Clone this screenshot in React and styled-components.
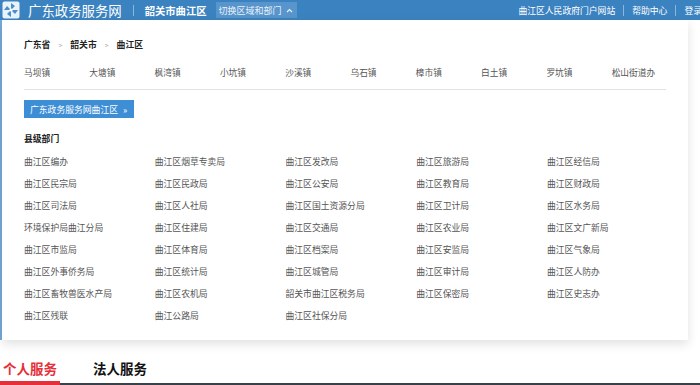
import React from 'react';
import styled, { createGlobalStyle } from 'styled-components';

const GlobalStyle = createGlobalStyle`
  html, body {
    margin: 0;
    padding: 0;
    background: #fff;
    font-family: "Noto Sans CJK SC", "Liberation Sans", sans-serif;
    overflow: hidden;
  }
  * { box-sizing: border-box; }
`;

const Page = styled.div`
  width: 700px;
  height: 385px;
  overflow: hidden;
`;

const Header = styled.header`
  height: 20px;
  background: #3b83c0;
  display: flex;
  align-items: center;
  justify-content: space-between;
  color: #fff;
  white-space: nowrap;
`;

const HeaderLeft = styled.div`
  display: flex;
  align-items: center;
  padding-left: 2px;
`;

const Title = styled.span`
  font-size: 13.4px;
  margin-left: 8px;
  line-height: 20px;
`;

const Divider = styled.span`
  width: 1px;
  height: 11px;
  background: #8cb6dc;
  margin: 0 ${(p) => p.$gap || 11}px;
`;

const Region = styled.span`
  font-size: 10.3px;
  font-weight: bold;
`;

const Switcher = styled.span`
  margin-left: 9px;
  height: 16px;
  padding: 0 4px 0 3px;
  background: #5795cc;
  font-size: 9px;
  display: flex;
  align-items: center;
  gap: 4px;
  color: #eaf2fa;
`;

const HeaderRight = styled.nav`
  display: flex;
  align-items: center;
  font-size: 8.8px;
  margin-right: -2px;
`;

const Main = styled.main`
  position: relative;
`;

const Banner = styled.div`
  height: 320px;
  background: linear-gradient(to right, #77a9d8 0, #77a9d8 2px, #fff 2px);
`;

const Panel = styled.section`
  position: absolute;
  top: 0;
  left: 2px;
  width: 686px;
  height: 320px;
  background: #fff;
  box-shadow: 0 4px 10px rgba(0, 0, 0, 0.12);
  padding: 18px 22px 15px;
`;

const Crumbs = styled.div`
  display: flex;
  align-items: center;
  font-size: 8.8px;
  font-weight: bold;
  color: #222;
  line-height: 14px;
`;

const CrumbArrow = styled.span`
  color: #aaa;
  font-weight: normal;
  font-size: 7px;
  margin: 0 8px;
`;

const Towns = styled.div`
  margin-top: 14px;
  padding-bottom: 9px;
  border-bottom: 1px solid #e2e2e2;
  display: grid;
  grid-template-columns: repeat(10, 65.3px);
  width: 642px;
  font-size: 8.7px;
  line-height: 14px;
  color: #555;
  white-space: nowrap;
`;

const SiteButton = styled.div`
  margin-top: 10px;
  width: 110px;
  height: 18px;
  background: #3d8ed5;
  color: #fff;
  font-size: 8.8px;
  display: flex;
  align-items: center;
  padding-left: 6px;
  gap: 5px;
`;

const SectionTitle = styled.h3`
  margin: 14px 0 0;
  font-size: 8.8px;
  font-weight: bold;
  color: #222;
  line-height: 14px;
`;

const DeptGrid = styled.div`
  margin-top: 4px;
  display: grid;
  grid-template-columns: repeat(5, 130.75px);
  grid-auto-rows: 22px;
  align-items: center;
  font-size: 8.8px;
  color: #555;
  white-space: nowrap;
`;

const TabBar = styled.div`
  height: 45px;
  display: flex;
  align-items: flex-end;
  gap: 30px;
  border-bottom: 2px solid #39424b;
`;

const Tab = styled.div`
  font-size: 13.5px;
  font-weight: bold;
  line-height: 20px;
  padding: 0 3px 3px;
  margin-bottom: -2px;
  color: ${(p) => (p.$active ? '#e5303a' : '#111')};
  border-bottom: 4px solid ${(p) => (p.$active ? '#e5303a' : 'transparent')};
`;

const Logo = () => (
  <svg width="18" height="18" viewBox="0 0 18 18">
    <rect x="0.5" y="0.5" width="17" height="17" rx="2" fill="#eaf2fa" />
    <g fill="#4a8fcb">
      <path d="M9 9 L9 2 L13 5 Z" />
      <path d="M9 9 L16 9 L13 13 Z" />
      <path d="M9 9 L9 16 L5 13 Z" />
      <path d="M9 9 L2 9 L5 5 Z" />
    </g>
    <circle cx="9" cy="9" r="1.6" fill="#fff" />
  </svg>
);

const towns = ['马坝镇', '大塘镇', '枫湾镇', '小坑镇', '沙溪镇', '乌石镇', '樟市镇', '白土镇', '罗坑镇', '松山街道办'];

const depts = [
  '曲江区编办', '曲江区烟草专卖局', '曲江区发改局', '曲江区旅游局', '曲江区经信局',
  '曲江区民宗局', '曲江区民政局', '曲江区公安局', '曲江区教育局', '曲江区财政局',
  '曲江区司法局', '曲江区人社局', '曲江区国土资源分局', '曲江区卫计局', '曲江区水务局',
  '环境保护局曲江分局', '曲江区住建局', '曲江区交通局', '曲江区农业局', '曲江区文广新局',
  '曲江区市监局', '曲江区体育局', '曲江区档案局', '曲江区安监局', '曲江区气象局',
  '曲江区外事侨务局', '曲江区统计局', '曲江区城管局', '曲江区审计局', '曲江区人防办',
  '曲江区畜牧兽医水产局', '曲江区农机局', '韶关市曲江区税务局', '曲江区保密局', '曲江区史志办',
  '曲江区残联', '曲江公路局', '曲江区社保分局',
];

export default function App() {
  return (
    <Page>
      <GlobalStyle />
      <Header>
        <HeaderLeft>
          <Logo />
          <Title>广东政务服务网</Title>
          <Divider />
          <Region>韶关市曲江区</Region>
          <Switcher>
            切换区域和部门
            <svg width="7" height="5" viewBox="0 0 7 5">
              <path d="M1 4 L3.5 1.5 L6 4" stroke="#eaf2fa" strokeWidth="1.2" fill="none" />
            </svg>
          </Switcher>
        </HeaderLeft>
        <HeaderRight>
          <span>曲江区人民政府门户网站</span>
          <Divider $gap={8} />
          <span>帮助中心</span>
          <Divider $gap={8} />
          <span>登录</span>
        </HeaderRight>
      </Header>
      <Main>
        <Banner />
        <Panel>
          <Crumbs>
            <span>广东省</span>
            <CrumbArrow>&gt;</CrumbArrow>
            <span>韶关市</span>
            <CrumbArrow>&gt;</CrumbArrow>
            <span>曲江区</span>
          </Crumbs>
          <Towns>
            {towns.map((t) => (
              <span key={t}>{t}</span>
            ))}
          </Towns>
          <SiteButton>
            广东政务服务网曲江区
            <span>»</span>
          </SiteButton>
          <SectionTitle>县级部门</SectionTitle>
          <DeptGrid>
            {depts.map((d) => (
              <span key={d}>{d}</span>
            ))}
          </DeptGrid>
        </Panel>
        <TabBar>
          <Tab $active>个人服务</Tab>
          <Tab>法人服务</Tab>
        </TabBar>
      </Main>
    </Page>
  );
}
